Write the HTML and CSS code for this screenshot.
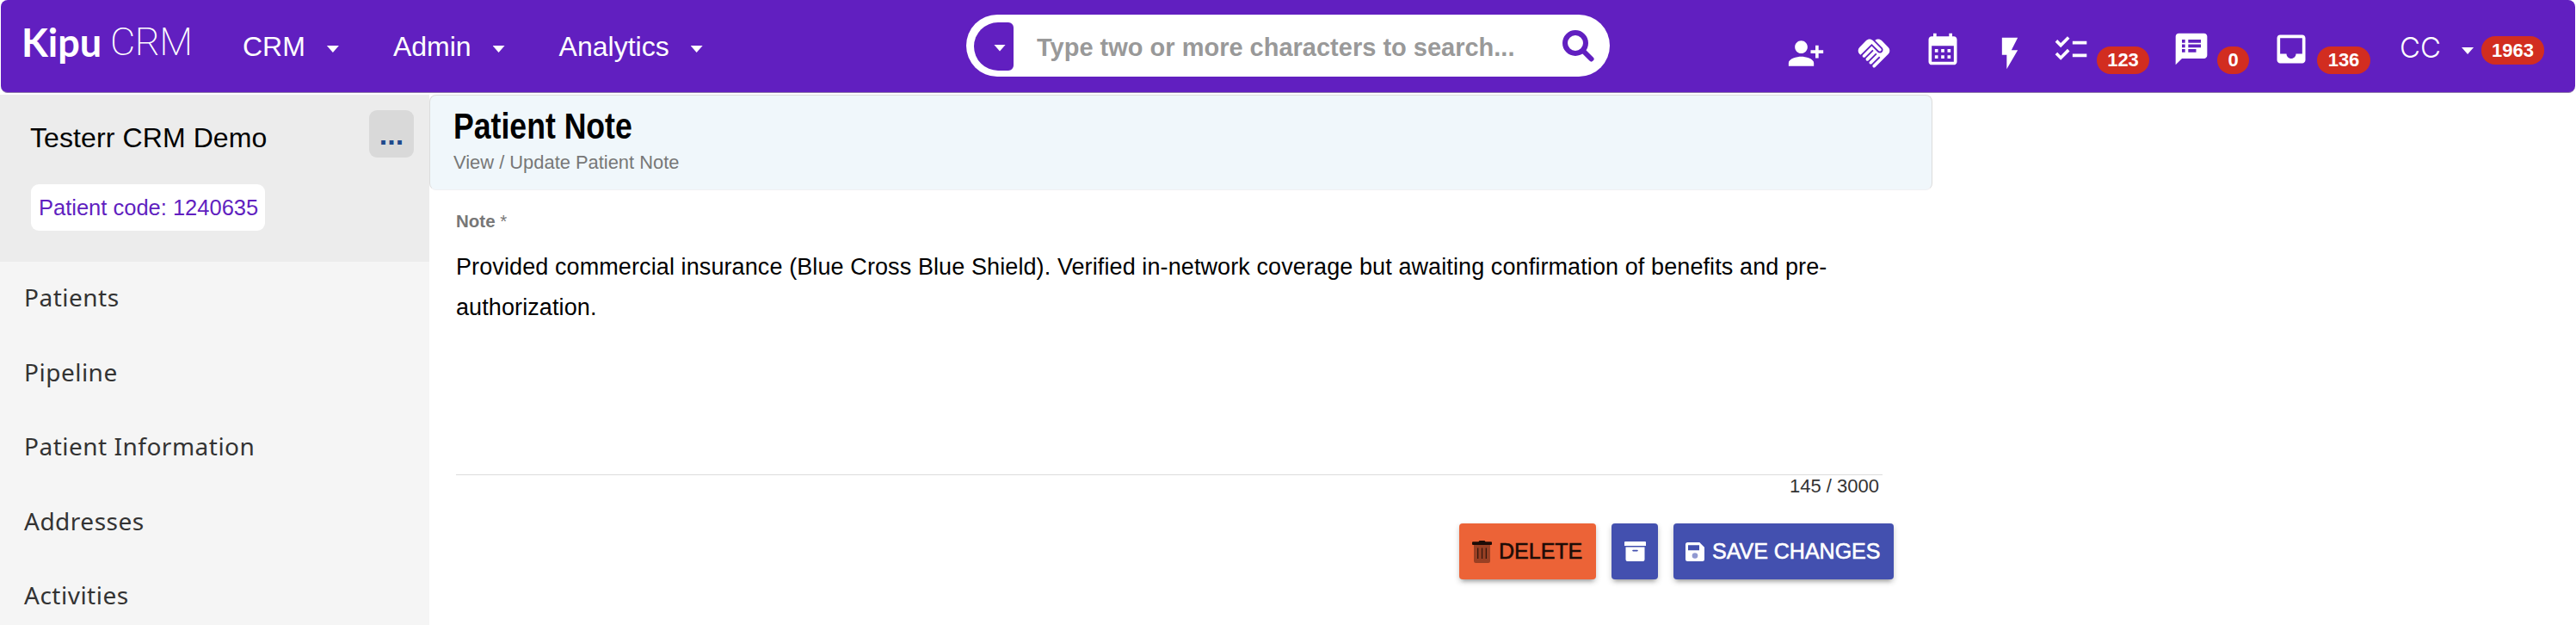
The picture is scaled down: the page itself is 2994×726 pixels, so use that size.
FILE: index.html
```
<!DOCTYPE html>
<html lang="en">
<head>
  <meta charset="UTF-8" />
  <title>Kipu CRM - Patient Note</title>
  <link rel="stylesheet" href="styles.css">
</head>
<body>
  <header class="navbar">
    <a class="logo" href="#"><span class="logo-kipu">Kipu</span><span class="logo-crm">CRM</span></a>

    <nav class="menu">
      <a href="#">CRM <i class="caret"></i></a>
      <a href="#">Admin <i class="caret"></i></a>
      <a href="#">Analytics <i class="caret"></i></a>
    </nav>

    <form class="search">
      <button type="button" class="search-type"><i class="caret"></i></button>
      <input type="text" placeholder="Type two or more characters to search...">
      <svg class="search-icon" viewBox="0 0 37 37"><circle cx="15" cy="15" r="12"/><path d="M24 24l9.500 9.500"/></svg>
    </form>

    <div class="actions">
      <svg class="icon add-person" viewBox="0 0 24 24"><path d="M13 8c0-2.210-1.790-4-4-4S5 5.790 5 8s1.790 4 4 4 4-1.790 4-4zm2 2v2h3v3h2v-3h3v-2h-3V7h-2v3h-3zM1 18v2h16v-2c0-2.660-5.330-4-8-4s-8 1.340-8 4z"/></svg>
      <svg class="icon handshake" viewBox="0 0 24 24"><path d="M16.480 10.410c-.39.39-1.040.39-1.430 0l-4.470-4.460-7.050 7.040-.66-.63c-1.170-1.170-1.170-3.070 0-4.240l4.240-4.240c1.170-1.170 3.070-1.170 4.240 0L16.480 9c.39.39.39 1.020 0 1.410zm.7-2.120c.78.78.78 2.050 0 2.830-1.270 1.270-2.610.22-2.830 0l-3.760-3.760-5.570 5.570c-.39.39-.39 1.020 0 1.410.39.39 1.020.39 1.420 0l4.620-4.620.71.71-4.620 4.620c-.39.39-.39 1.020 0 1.410.39.39 1.020.39 1.420 0l4.620-4.620.71.71-4.620 4.620c-.39.39-.39 1.020 0 1.410.39.39 1.020.39 1.410 0l4.620-4.620.71.71-4.620 4.620c-.39.39-.39 1.020 0 1.410.39.39 1.020.39 1.410 0l8.320-8.340c1.170-1.170 1.170-3.070 0-4.240l-4.240-4.240c-1.150-1.150-3.010-1.170-4.180-.06l4.470 4.470z"/></svg>
      <svg class="icon calendar" viewBox="0 0 24 24"><path d="M19 4h-1V2h-2v2H8V2H6v2H5c-1.110 0-1.990.9-1.990 2L3 20c0 1.100.89 2 2 2h14c1.100 0 2-.9 2-2V6c0-1.100-.9-2-2-2zm0 16H5V10h14v10zM9 14H7v-2h2v2zm4 0h-2v-2h2v2zm4 0h-2v-2h2v2zm-8 4H7v-2h2v2zm4 0h-2v-2h2v2zm4 0h-2v-2h2v2z"/></svg>
      <svg class="icon bolt" viewBox="0 0 24 24"><path d="M7 2v11h3v9l7-12h-4l4-8z"/></svg>
      <svg class="icon tasks" viewBox="0 0 24 24"><path d="M22 7h-9v2h9V7zm0 8h-9v2h9v-2zM5.540 11L2 7.460l1.410-1.410 2.120 2.120 4.240-4.240 1.410 1.410L5.540 11zm0 8L2 15.460l1.410-1.410 2.120 2.120 4.240-4.240 1.410 1.410L5.540 19z"/></svg>
      <span class="badge badge-tasks">123</span>
      <svg class="icon notes" viewBox="0 0 24 24"><path d="M20 2H4c-1.100 0-1.990.9-1.990 2L2 22l4-4h14c1.100 0 2-.9 2-2V4c0-1.100-.9-2-2-2zM8 14H6v-2h2v2zm0-3H6V9h2v2zm0-3H6V6h2v2zm7 6h-5v-2h5v2zm3-3h-8V9h8v2zm0-3h-8V6h8v2z"/></svg>
      <span class="badge badge-notes">0</span>
      <svg class="icon inbox" viewBox="0 0 24 24"><path d="M19 3H4.990c-1.110 0-1.980.89-1.980 2L3 19c0 1.100.88 2 1.990 2H19c1.100 0 2-.9 2-2V5c0-1.110-.9-2-2-2zm0 12h-4c0 1.660-1.350 3-3 3s-3-1.340-3-3H4.990V5H19v10z"/></svg>
      <span class="badge badge-inbox">136</span>
      <a class="user" href="#">CC <i class="caret"></i></a>
      <span class="badge badge-user">1963</span>
    </div>
  </header>

  <div class="page">
    <aside class="sidebar">
      <div class="patient">
        <div class="patient-row">
          <div class="patient-name">Testerr CRM Demo</div>
          <button class="more">...</button>
        </div>
        <div class="patient-code">Patient code: 1240635</div>
      </div>
      <nav class="side-nav">
        <a href="#">Patients</a>
        <a href="#">Pipeline</a>
        <a href="#">Patient Information</a>
        <a href="#">Addresses</a>
        <a href="#">Activities</a>
      </nav>
    </aside>

    <main class="content">
      <div class="content-header">
        <h1>Patient Note</h1>
        <p>View / Update Patient Note</p>
      </div>

      <div class="note-form">
        <label class="note-label" for="note">Note <span>*</span></label>
        <textarea id="note" class="note-text">Provided commercial insurance (Blue Cross Blue Shield). Verified in-network coverage but awaiting confirmation of benefits and pre-authorization.</textarea>
        <div class="note-count">145 / 3000</div>

        <div class="buttons">
          <button class="btn delete">
            <svg class="icon-trash" viewBox="0 0 23 26"><path d="M1 1.300h6.500L8.500 0h6l1 1.300H22a1 1 0 0 1 1 1V4a1 1 0 0 1-1 1H1a1 1 0 0 1-1-1V2.300a1 1 0 0 1 1-1z"/><path class="faded" d="M2 5h19v18.500a2.500 2.500 0 0 1-2.500 2.500h-14A2.500 2.500 0 0 1 2 23.500z"/><path class="bars" d="M6 8.500h1.300V21H6zM10.900 8.500h1.300V21h-1.300zM15.700 8.500H17V21h-1.300z"/></svg>
            DELETE
          </button>
          <button class="btn archive">
            <svg class="icon-archive" viewBox="0 0 25 23"><path fill-rule="evenodd" d="M1 0h23a1 1 0 0 1 1 1v4H0V1a1 1 0 0 1 1-1zM1.500 6.500h22V21a2 2 0 0 1-2 2h-18a2 2 0 0 1-2-2zM10 9.800a.8.8 0 0 0 0 1.600h5a.8.8 0 0 0 0-1.600z"/></svg>
          </button>
          <button class="btn save">
            <svg class="icon-save" viewBox="0 0 22 22"><path fill-rule="evenodd" d="M2.500 0h13.800L22 5.700v13.800a2.500 2.500 0 0 1-2.500 2.500h-17A2.500 2.500 0 0 1 0 19.500v-17A2.500 2.500 0 0 1 2.500 0zM3 3.200v6h13v-6z"/><circle cx="11" cy="15.500" r="3.300"/></svg>
            SAVE CHANGES
          </button>
        </div>
      </div>
    </main>
  </div>
</body>
</html>
```

FILE: styles.css
```
* {
  box-sizing: border-box;
}

body {
  margin: 0;
  height: 726px;
  overflow: hidden;
  background: #fff;
  color: #000;
  font-family: "Liberation Sans", Arial, sans-serif;
}

a {
  text-decoration: none;
  color: inherit;
}

button {
  border: none;
  font-family: inherit;
  padding: 0;
  cursor: pointer;
}

/* Top bar */
.navbar {
  display: flex;
  height: 108px;
  margin: 0 1px;
  background: #611fc0;
  border-bottom: 1px solid #8f7bab;
  border-radius: 8px;
  color: #fff;
}

.logo {
  display: flex;
  width: 281px;
  padding: 20px 0 0 24px;
  font-family: Lato, sans-serif;
  font-size: 45px;
  line-height: 58px;
}

.logo-kipu {
  width: 103px;
  font-weight: bold;
}

.logo-crm {
  font-family: Roboto, sans-serif;
  font-weight: 200;
  letter-spacing: -0.5px;
}

.menu {
  display: flex;
  width: 841px;
  padding-top: 34px;
  font-size: 32px;
  line-height: 40px;
}

.menu a {
  display: flex;
  margin-right: 63px;
}

.caret {
  width: 14px;
  height: 8px;
  background: currentColor;
  clip-path: polygon(0 0, 100% 0, 50% 100%);
}

.menu .caret {
  margin: 19px 0 0 25px;
}

.search {
  display: flex;
  width: 748px;
  height: 72px;
  margin-top: 17px;
  padding: 9px;
  background: #fff;
  border-radius: 36px;
}

.search-type {
  width: 46px;
  height: 56px;
  background: #611fc0;
  color: #fff;
  border-radius: 28px 6px 6px 28px;
}

.search-type .caret {
  display: block;
  margin: 3px 0 0 23px;
}

.search input {
  width: 600px;
  margin-left: 27px;
  padding: 5px 0 0;
  border: none;
  background: none;
  font: bold 29px "Liberation Sans", Arial, sans-serif;
}

.search input::placeholder {
  color: #999;
}

.search-icon {
  width: 37px;
  height: 37px;
  margin: 9px 0 0 11px;
  fill: none;
  stroke: #611fc0;
  stroke-width: 6;
  stroke-linecap: round;
}

.actions {
  display: flex;
  margin-left: 206px;
}

.icon {
  flex: none;
  width: 44px;
  height: 44px;
  margin-top: 35px;
  fill: #fff;
}

.add-person,
.handshake,
.bolt {
  margin-top: 40px;
}

.handshake {
  margin-left: 35px;
}

.calendar {
  margin-left: 36px;
}

.bolt {
  margin-left: 34px;
}

.tasks {
  margin-left: 27px;
}

.badge {
  height: 32px;
  margin-top: 54px;
  border-radius: 16px;
  background: #d22d20;
  font-size: 22px;
  font-weight: bold;
  line-height: 32px;
  text-align: center;
}

.badge-tasks {
  width: 61px;
  margin-left: 8px;
}

.notes {
  margin-left: 27px;
}

.badge-notes {
  width: 37px;
  margin-left: 8px;
}

.inbox {
  margin-left: 27px;
}

.badge-inbox {
  width: 62px;
  margin-left: 8px;
}

.user {
  display: flex;
  margin-left: 34px;
  padding-top: 35px;
  font-family: Inter, sans-serif;
  font-size: 33px;
  font-weight: 300;
  line-height: 40px;
}

.user .caret {
  margin: 20px 0 0 24px;
}

.badge-user {
  width: 73px;
  height: 33px;
  margin: 42px 0 0 9px;
  line-height: 33px;
}

.page {
  display: flex;
  height: 616px;
  margin-top: 2px;
}

/* Sidebar */
.sidebar {
  width: 499px;
  background: #f5f5f5;
}

.patient {
  height: 194px;
  padding: 18px 18px 0 35px;
  background: #ececec;
}

.patient-row {
  display: flex;
  height: 86px;
  justify-content: space-between;
}

.patient-name {
  padding-top: 2px;
  font-size: 32px;
  line-height: 60px;
  letter-spacing: 0.1px;
}

.more {
  width: 52px;
  height: 55px;
  background: #d9d9d9;
  border-radius: 9px;
  color: #1f4a8c;
  font-size: 34px;
  font-weight: bold;
  line-height: 50px;
}

.patient-code {
  width: 272px;
  height: 54px;
  margin-left: 1px;
  padding-left: 9px;
  background: #fff;
  border-radius: 9px;
  color: #611fc0;
  font-size: 25.5px;
  line-height: 55px;
}

.side-nav {
  margin-top: -1px;
}

.side-nav a {
  display: block;
  height: 86.5px;
  padding-left: 28px;
  color: #333;
  font-family: "Noto Sans", "Open Sans", sans-serif;
  font-size: 28px;
  line-height: 85px;
  letter-spacing: 0.5px;
}

/* Patient note */
.content {
  width: 1747px;
}

.content-header {
  height: 111px;
  padding: 12px 27px;
  background: #f0f7fb;
  border: 1px solid #dcdcdc;
  border-bottom-color: #f0f0f3;
  border-radius: 8px;
}

/* condensed heading */
.content-header h1 {
  margin: 0;
  font-size: 42px;
  line-height: 48px;
  transform: scaleX(0.848);
  transform-origin: 0 0;
}

.content-header p {
  margin: 5px 0 0;
  color: #777;
  font-size: 21.9px;
  line-height: 26px;
}

.note-form {
  padding: 24px 58px 0 31px;
}

.note-label {
  display: block;
  color: #777;
  font-size: 20.5px;
  font-weight: bold;
  line-height: 24px;
}

.note-label span {
  font-weight: normal;
}

.note-text {
  display: block;
  width: 100%;
  height: 283px;
  padding: 18px 0 0;
  border: none;
  border-bottom: 1px solid #ddd;
  outline: none;
  resize: none;
  overflow: hidden;
  font: 27px/47px "Liberation Sans", Arial, sans-serif;
  letter-spacing: 0.1px;
}

.note-count {
  padding-right: 4px;
  color: #333;
  font-size: 22px;
  line-height: 26px;
  text-align: right;
}

.buttons {
  display: flex;
  justify-content: flex-end;
  gap: 18px;
  margin: 30px -13px 0 0;
}

.btn {
  display: flex;
  align-items: center;
  height: 65px;
  border-radius: 4px;
  background: #4350af;
  color: #fff;
  fill: currentColor;
  font-size: 25px;
  -webkit-text-stroke: 0.6px currentColor;
  box-shadow: 0 6px 4px -4px rgba(0, 0, 0, 0.2), 0 3px 6px rgba(0, 0, 0, 0.22);
}

.btn svg {
  stroke: none;
}

.delete {
  width: 159px;
  padding-left: 15px;
  background: #ec6337;
  color: #1d0c07;
}

.icon-trash {
  width: 23px;
  height: 26px;
  margin-right: 8px;
}

.faded {
  opacity: 0.4;
}

.bars {
  opacity: 0.8;
}

.archive {
  width: 54px;
  justify-content: center;
}

.icon-archive {
  width: 25px;
  height: 23px;
}

.save {
  width: 256px;
  padding-left: 14px;
}

.icon-save {
  width: 22px;
  height: 22px;
  margin-right: 9px;
}

.icon-save circle {
  fill: #9199d1;
}
```
